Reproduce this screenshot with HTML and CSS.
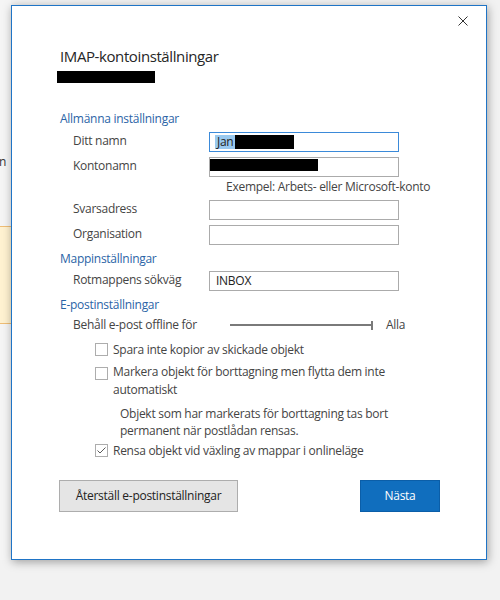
FILE: index.html
```html
<!DOCTYPE html>
<html lang="sv">
<head>
<meta charset="utf-8">
<title>IMAP-kontoinställningar</title>
<link rel="stylesheet" href="styles.css">
</head>
<body>
<div class="page">
  <div class="backdrop">
    <div class="bd-text">n</div>
    <div class="bd-note"></div>
  </div>
  <div class="dialog">
    <div class="topbar">
      <svg class="close" viewBox="0 0 10 10" aria-label="Stäng"><path d="M0.5 0.5L9.5 9.5M9.5 0.5L0.5 9.5" stroke="#333" stroke-width="1" fill="none"/></svg>
    </div>
    <div class="body">
      <h1 class="title">IMAP-kontoinställningar</h1>
      <div class="redact sub"></div>

      <h2 class="section s1">Allmänna inställningar</h2>
      <div class="form f1">
        <label>Ditt namn</label>
        <div class="field focus"><span class="sel">Jan</span><span class="redact r-name"></span></div>
        <label>Kontonamn</label>
        <div class="field bare"><span class="redact r-acc"></span></div>
      </div>
      <div class="hint">Exempel: Arbets- eller Microsoft-konto</div>
      <div class="form f2">
        <label>Svarsadress</label>
        <div class="field"></div>
        <label>Organisation</label>
        <div class="field"></div>
      </div>

      <h2 class="section s2">Mappinställningar</h2>
      <div class="form f3">
        <label>Rotmappens sökväg</label>
        <div class="field">INBOX</div>
      </div>

      <h2 class="section s3">E-postinställningar</h2>
      <div class="offline">
        <span class="offline-label">Behåll e-post offline för</span>
        <span class="slider"><span class="track"></span><span class="thumb"></span></span>
        <span class="offline-value">Alla</span>
      </div>

      <div class="check c1"><span class="box"></span><span class="ctext">Spara inte kopior av skickade objekt</span></div>
      <div class="check c2"><span class="box"></span><span class="ctext">Markera objekt för borttagning men flytta dem inte automatiskt</span></div>
      <div class="note">Objekt som har markerats för borttagning tas bort permanent när postlådan rensas.</div>
      <div class="check c3"><span class="box checked"><svg viewBox="0 0 11 11"><polyline points="1.5,5.5 4,8 9.5,2.5" stroke="#5a5a5a" stroke-width="1" fill="none"/></svg></span><span class="ctext">Rensa objekt vid växling av mappar i onlineläge</span></div>

      <div class="buttons">
        <button class="btn reset" type="button">Återställ e-postinställningar</button>
        <button class="btn next" type="button">Nästa</button>
      </div>
    </div>
  </div>
</div>
</body>
</html>
```

FILE: styles.css
```css
* { box-sizing: border-box; }
html, body { margin: 0; height: 100%; }
body {
  background: #f2f2f2;
  font-family: "Open Sans", sans-serif;
  font-size: 12px;
  letter-spacing: -0.27px;
  color: #444;
  overflow: hidden;
}
.page { display: flex; align-items: flex-start; }

.backdrop {
  flex: none;
  width: 11px;
  height: 560px;
  background: #f5f5f5;
  display: flex;
  flex-direction: column;
  overflow: hidden;
}
.bd-text { margin-top: 154px; line-height: 16px; color: #333; text-indent: -1px; }
.bd-note {
  margin-top: 56px;
  height: 98px;
  background: #fff2d1;
  border-top: 1px solid #efbe76;
  border-bottom: 1px solid #efbe76;
}

.dialog {
  flex: none;
  width: 476px;
  margin-top: 5px;
  background: #fff;
  border: 1px solid #1f74c6;
  box-shadow: 1px 2px 9px rgba(0, 0, 0, 0.35);
  display: flex;
  flex-direction: column;
}
.topbar { height: 20px; display: flex; justify-content: flex-end; align-items: flex-start; padding-right: 18px; }
.close { width: 10px; height: 10px; margin-top: 10px; display: block; }

.body { padding: 0 46px 47px 48px; display: flex; flex-direction: column; align-items: flex-start; }
.title { margin: 20px 0 0; font-size: 15px; line-height: 20px; font-weight: 400; color: #262626; letter-spacing: -0.4px; }
.redact { background: #000; display: block; }
.sub { margin: 5px 0 0 -3px; width: 98px; height: 12px; }

.section { margin: 0; font-size: 12px; line-height: 16px; font-weight: 400; color: #2b64a6; }
.s1 { margin-top: 28px; }
.s2, .s3 { margin-top: 6px; }

.form { display: grid; grid-template-columns: 136px 190px; row-gap: 5px; padding-left: 13px; }
.form label { line-height: 16px; margin-top: 1px; align-self: start; }
.f1, .f2 { margin-top: 5px; }
.f3 { margin-top: 4px; }

.field {
  height: 20px;
  border: 1px solid #ababab;
  background: #fff;
  line-height: 18px;
  padding-left: 6px;
  color: #222;
  display: flex;
  align-items: center;
  white-space: nowrap;
  overflow: hidden;
}
.field.focus { border-color: #3b8ad9; padding-left: 5px; }
.field.bare { padding-left: 0; }
.sel { padding: 0 2px; height: 14px; line-height: 14px; background: #99c9ef; color: #222; }
.r-name { width: 59px; height: 14px; }
.r-acc { width: 109px; height: 12px; margin-left: -1px; align-self: flex-start; margin-top: 1px; }

.hint { margin-top: 2px; padding-left: 166px; line-height: 16px; }

.offline { margin-top: 4px; display: flex; align-items: center; padding-left: 13px; line-height: 16px; }
.offline-label { width: 157px; flex: none; }
.slider { width: 143px; height: 9px; display: flex; align-items: center; flex: none; }
.track { flex: 1; height: 2px; background: #7a7a7a; }
.thumb { width: 2px; height: 9px; background: #7a7a7a; }
.offline-value { margin-left: 13px; }

.check { display: flex; align-items: flex-start; padding-left: 35px; line-height: 16px; }
.box {
  flex: none;
  width: 13px;
  height: 13px;
  border: 1px solid #adadad;
  background: #fff;
  margin: 1px 5px 0 0;
  display: flex;
}
.box svg { width: 11px; height: 11px; display: block; }
.ctext { max-width: 300px; }
.c1 { margin-top: 9px; }
.c2 { margin-top: 5px; line-height: 18px; }
.c2 .box { margin-top: 4px; }
.c3 { margin-top: 4px; }

.note { margin-top: 6px; padding-left: 60px; line-height: 17px; max-width: 350px; }

.buttons { margin: 21px 0 0 -1px; align-self: stretch; display: flex; justify-content: space-between; }
.btn {
  font: inherit;
  letter-spacing: inherit;
  height: 32px;
  line-height: 16px;
  padding: 0;
  border: 1px solid;
  margin: 0;
}
.reset { width: 179px; background: #e5e5e5; border-color: #adadad; color: #222; }
.next { width: 80px; background: #106ebe; border-color: #0b5ea8; color: #fff; }
```
